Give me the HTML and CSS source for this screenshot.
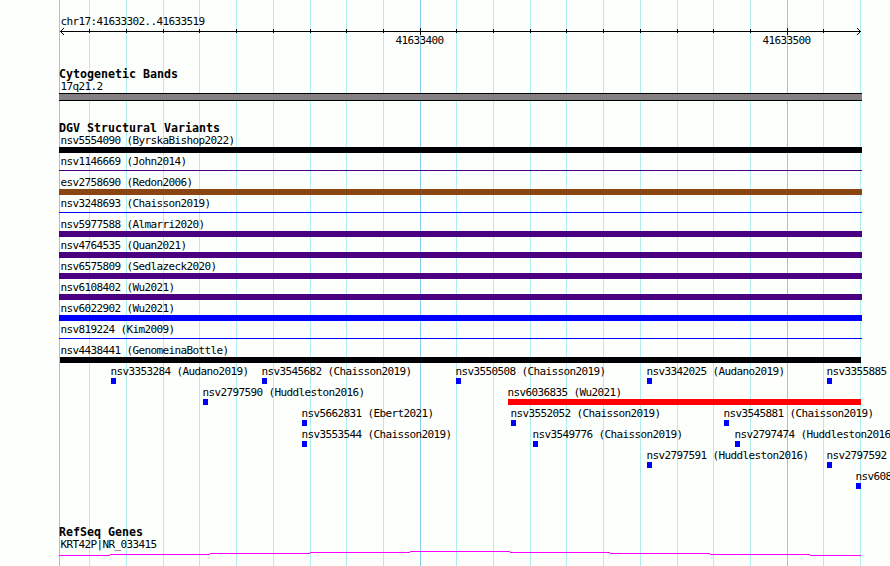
FILE: index.html
```
<!DOCTYPE html>
<html lang="en">
<head>
    <meta charset="UTF-8">
    <meta name="viewport" content="width=device-width, initial-scale=1.0">
    <title>chr17:41633302..41633519</title>
    <link rel="stylesheet" href="styles.css">
</head>

<body>
    <div class="browser">
        <!-- Vertical grid lines behind all tracks -->
        <svg class="grid" width="890" height="566" shape-rendering="crispEdges">
            <path class="minor" d="M89.5 0V566M126.5 0V566M163.5 0V566M199.5 0V566M236.5 0V566M273.5 0V566M310.5 0V566M346.5 0V566M383.5 0V566M456.5 0V566M493.5 0V566M530.5 0V566M566.5 0V566M603.5 0V566M640.5 0V566M677.5 0V566M713.5 0V566M750.5 0V566M823.5 0V566M860.5 0V566"/>
            <path class="major" d="M59.5 0V566M420.5 0V566M787.5 0V566"/>
        </svg>

        <!-- Ruler -->
        <header class="ruler">
            <div class="label region">chr17:41633302..41633519</div>
            <svg class="scale" width="803" height="7" shape-rendering="crispEdges">
                <path d="M1 3.5H802M30.5 1V5M67.5 1V5M104.5 1V5M140.5 1V5M177.5 1V5M214.5 1V5M251.5 1V5M287.5 1V5M324.5 1V5M361.5 0V7M397.5 1V5M434.5 1V5M471.5 1V5M507.5 1V5M544.5 1V5M581.5 1V5M618.5 1V5M654.5 1V5M691.5 1V5M728.5 0V7M764.5 1V5"/>
                <path d="M4.5 0V1M3.5 1V2M2.5 2V3M1.5 3V4M2.5 4V5M3.5 5V6M4.5 6V7M798.5 0V1M799.5 1V2M800.5 2V3M801.5 3V4M800.5 4V5M799.5 5V6M798.5 6V7"/>
            </svg>
            <div class="positions">
                <span class="label">41633400</span>
                <span class="label">41633500</span>
            </div>
        </header>

        <!-- Cytogenetic bands -->
        <section class="track bands">
            <h2>Cytogenetic Bands</h2>
            <div class="label">17q21.2</div>
            <div class="band"></div>
        </section>

        <!-- Structural variants -->
        <section class="track variants">
            <h2>DGV Structural Variants</h2>
            <div class="row"><div class="feature full black"><span class="label">nsv5554090 (ByrskaBishop2022)</span><i></i></div></div>
            <div class="row"><div class="feature full thin purple"><span class="label">nsv1146669 (John2014)</span><i></i></div></div>
            <div class="row"><div class="feature full brown"><span class="label">esv2758690 (Redon2006)</span><i></i></div></div>
            <div class="row"><div class="feature full thin blue"><span class="label">nsv3248693 (Chaisson2019)</span><i></i></div></div>
            <div class="row"><div class="feature full purple"><span class="label">nsv5977588 (Almarri2020)</span><i></i></div></div>
            <div class="row"><div class="feature full purple"><span class="label">nsv4764535 (Quan2021)</span><i></i></div></div>
            <div class="row"><div class="feature full purple"><span class="label">nsv6575809 (Sedlazeck2020)</span><i></i></div></div>
            <div class="row"><div class="feature full purple"><span class="label">nsv6108402 (Wu2021)</span><i></i></div></div>
            <div class="row"><div class="feature full blue"><span class="label">nsv6022902 (Wu2021)</span><i></i></div></div>
            <div class="row"><div class="feature full thin blue"><span class="label">nsv819224 (Kim2009)</span><i></i></div></div>
            <div class="row"><div class="feature full inner black"><span class="label">nsv4438441 (GenomeinaBottle)</span><i></i></div></div>
            <div class="row">
                <div class="feature blue" style="margin-left: 52px"><span class="label">nsv3353284 (Audano2019)</span><i></i></div>
                <div class="feature blue" style="margin-left: 203px"><span class="label">nsv3545682 (Chaisson2019)</span><i></i></div>
                <div class="feature blue" style="margin-left: 397px"><span class="label">nsv3550508 (Chaisson2019)</span><i></i></div>
                <div class="feature blue" style="margin-left: 588px"><span class="label">nsv3342025 (Audano2019)</span><i></i></div>
                <div class="feature blue" style="margin-left: 768px"><span class="label">nsv3355885</span><i></i></div>
            </div>
            <div class="row">
                <div class="feature blue" style="margin-left: 144px"><span class="label">nsv2797590 (Huddleston2016)</span><i></i></div>
                <div class="feature long red" style="margin-left: 449px"><span class="label">nsv6036835 (Wu2021)</span><i></i></div>
            </div>
            <div class="row">
                <div class="feature blue" style="margin-left: 243px"><span class="label">nsv5662831 (Ebert2021)</span><i></i></div>
                <div class="feature blue" style="margin-left: 452px"><span class="label">nsv3552052 (Chaisson2019)</span><i></i></div>
                <div class="feature blue" style="margin-left: 665px"><span class="label">nsv3545881 (Chaisson2019)</span><i></i></div>
            </div>
            <div class="row">
                <div class="feature blue" style="margin-left: 243px"><span class="label">nsv3553544 (Chaisson2019)</span><i></i></div>
                <div class="feature blue" style="margin-left: 474px"><span class="label">nsv3549776 (Chaisson2019)</span><i></i></div>
                <div class="feature blue" style="margin-left: 676px"><span class="label">nsv2797474 (Huddleston2016</span><i></i></div>
            </div>
            <div class="row">
                <div class="feature blue" style="margin-left: 588px"><span class="label">nsv2797591 (Huddleston2016)</span><i></i></div>
                <div class="feature blue" style="margin-left: 768px"><span class="label">nsv2797592</span><i></i></div>
            </div>
            <div class="row">
                <div class="feature blue" style="margin-left: 797px"><span class="label">nsv608</span><i></i></div>
            </div>
        </section>

        <!-- Genes -->
        <section class="track genes">
            <h2>RefSeq Genes</h2>
            <div class="label">KRT42P|NR_033415</div>
            <svg class="intron" width="803" height="5" shape-rendering="crispEdges">
                <path d="M0 4.5H51M51 3.5H151M151 2.5H251M251 1.5H351M351 0.5H451M451 1.5H551M551 2.5H651M651 3.5H751M751 4.5H802"/>
            </svg>
        </section>
    </div>
</body>

</html>
```
FILE: styles.css
```
body {
    margin: 0;
    background-color: #fdfffc;
    color: #000;
    font-family: "DejaVu Sans Mono", monospace;
}

/* The panel starts at the left edge of the region */
.browser {
    position: relative;
    box-sizing: border-box;
    width: 890px;
    height: 566px;
    padding: 15px 0 0 59px;
    overflow: hidden;
}

svg {
    display: block;
    fill: none;
}

/* Grid lines */
.grid {
    position: absolute;
    top: 0;
    left: 0;
    z-index: -1;
}

.minor {
    stroke: #afeeee;
}

.major {
    stroke: #87ceeb;
}

/* Small text used for all names and numbers */
.label {
    display: block;
    height: 13px;
    padding-left: 1.4px;
    font-size: 11px;
    line-height: 13px;
    letter-spacing: -0.6226px;
    white-space: nowrap;
}

/* Ruler */
.ruler {
    height: 53px;
}

.scale {
    stroke: #000;
}

.positions {
    display: flex;
    gap: 319px;
    margin-top: -1px;
    padding-left: 335px;
}

.positions .label {
    box-sizing: border-box;
    width: 48px;
}

/* Tracks */
.track h2 {
    height: 12px;
    margin: 0;
    font-size: 11.63px;
    line-height: 12px;
    font-weight: bold;
}

.bands {
    height: 54px;
}

.band {
    box-sizing: border-box;
    width: 803px;
    height: 8px;
    border: solid #000;
    border-width: 1px 0;
    background-color: #848084;
}

.variants {
    height: 404px;
}

/* One row of features, all in the same cell and shifted by their margin */
.row {
    display: grid;
    height: 21px;
}

.feature {
    grid-area: 1 / 1;
}

.feature .label {
    padding-left: 0;
    margin-left: -0.6px;
}

.feature i {
    display: block;
    width: 5px;
    height: 6px;
}

.full .label {
    margin-left: 1.4px;
}

.full i {
    width: 803px;
}

.inner i {
    width: 801px;
    margin-left: 1px;
}

.long i {
    width: 353px;
}

.thin i {
    height: 1px;
    margin-top: 2px;
}

/* Feature colours */
.black i {
    background-color: #000004;
}

.purple i {
    background-color: #4b0082;
}

.brown i {
    background-color: #8b4513;
}

.blue i {
    background-color: #0000ff;
}

.red i {
    background-color: #ff0000;
}

/* Gene line */
.intron {
    stroke: #ff00ff;
}
```
